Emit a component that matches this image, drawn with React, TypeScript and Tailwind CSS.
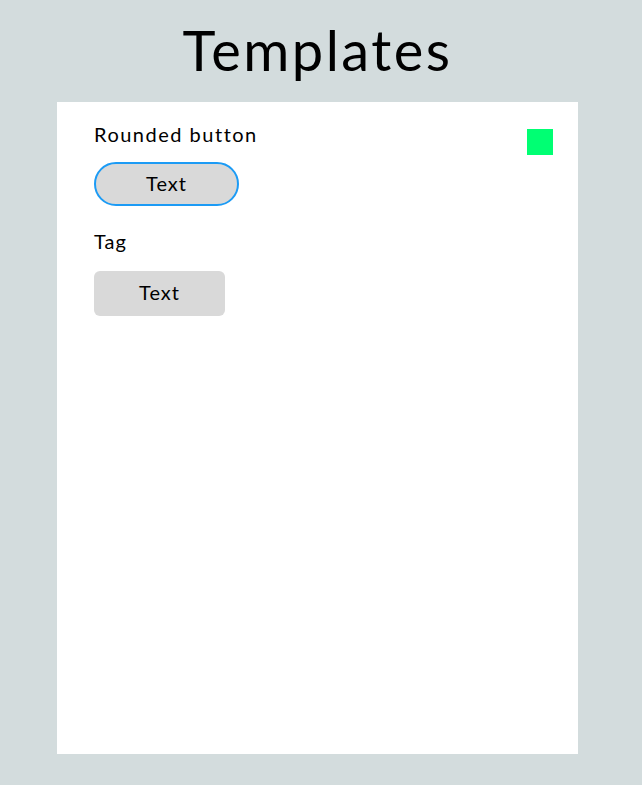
export default function App() {
  return (
    <div
      className="min-h-[785px] w-full bg-[#d3dcdd] text-black"
      style={{ fontFamily: 'Lato, "Noto Sans", sans-serif' }}
    >
      {/* Title */}
      <div className="flex h-[102px] w-[642px] items-center justify-center pr-[7px]">
        <h1 className="-mt-[2px] text-[56px] leading-none tracking-[2.5px]">Templates</h1>
      </div>

      {/* Panel */}
      <div className="ml-[57px] flex h-[652px] w-[521px] justify-between bg-white pl-[37px] pr-[25px] pt-[19px]">
        <div className="flex flex-col items-start">
          <div className="text-[20px] leading-[26px] tracking-[1.5px]">Rounded button</div>
          <button className="mt-[15px] h-[44px] w-[145px] rounded-full border-2 border-[#1c9bf5] bg-[#d9d9d9] pb-[3px] text-[20px] tracking-[1px]">
            Text
          </button>

          <div className="mt-[22px] text-[20px] leading-[26px] tracking-[1px]">Tag</div>
          <div className="mt-[17px] flex h-[45px] w-[131px] items-center justify-center rounded-[6px] bg-[#d9d9d9] pb-[3px] text-[20px] tracking-[1px]">
            Text
          </div>
        </div>

        <div className="mt-[8px] h-[26px] w-[26px] bg-[#00ff73]" />
      </div>
    </div>
  )
}
